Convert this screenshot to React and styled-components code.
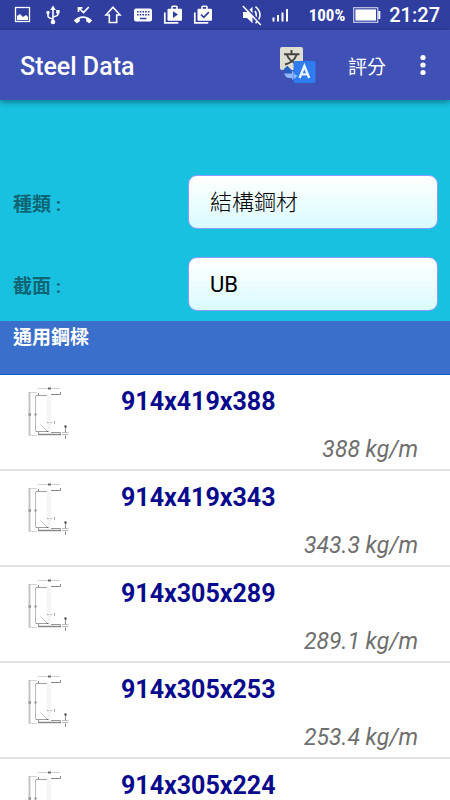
import React from "react";
import styled, { createGlobalStyle } from "styled-components";

const GlobalStyle = createGlobalStyle`
  * { box-sizing: border-box; }
  body {
    margin: 0;
    font-family: Roboto, "Noto Sans CJK TC", sans-serif;
    background: #fff;
  }
`;

const Screen = styled.div`
  display: flex;
  flex-direction: column;
  height: 100vh;
  overflow: hidden;
`;

const StatusBar = styled.div`
  display: flex;
  justify-content: space-between;
  align-items: center;
  flex: none;
  height: 30px;
  padding: 0 10px 0 13px;
  background: #303f9f;
  color: #fff;
`;

const StatusGroup = styled.div`
  display: flex;
  align-items: center;
  gap: ${(p) => p.$gap}px;
`;

const Glyph = styled.svg`
  display: block;
  flex: none;
`;

const BatteryText = styled.span`
  margin-left: 12px;
  font-family: "Roboto Condensed", Roboto, sans-serif;
  font-size: 17px;
  font-weight: 700;
  line-height: 20px;
`;

const Clock = styled.span`
  font-size: 20px;
  font-weight: 500;
  line-height: 24px;
`;

const Toolbar = styled.header`
  display: flex;
  align-items: center;
  flex: none;
  position: relative;
  height: 70px;
  padding: 0 6px 0 20px;
  background: #3f51b5;
  color: #fff;
  box-shadow: 0 2px 6px rgba(0, 0, 0, 0.4);
`;

const Title = styled.h1`
  flex: 1;
  margin: 0;
  padding-top: 4px;
  font-size: 25px;
  font-weight: 500;
  line-height: 32px;
`;

const ToolButton = styled.button`
  display: flex;
  align-items: center;
  justify-content: center;
  width: ${(p) => p.$width}px;
  height: 48px;
  padding: 0;
  border: 0;
  background: none;
  color: inherit;
  font: inherit;
  font-size: 19px;
  cursor: pointer;
`;

const Form = styled.form`
  display: flex;
  flex-direction: column;
  flex: none;
  gap: 28px;
  padding: 75px 12px 10px 13px;
  background: #18c1e0;
`;

const Field = styled.div`
  display: grid;
  grid-template-columns: 175px 1fr;
  align-items: center;
`;

const Label = styled.label`
  padding-top: 6px;
  color: #0e6574;
  font-size: 19px;
  font-weight: 700;
  line-height: 28px;
`;

const Select = styled.select`
  appearance: none;
  width: 100%;
  height: 54px;
  padding: 0 21px;
  border: 1px solid #8f9cff;
  border-radius: 9px;
  background: linear-gradient(#fff, #d9fbff);
  color: #000;
  font-family: inherit;
  font-size: 22px;
  font-weight: ${(p) => p.$weight};
`;

const SectionHeading = styled.h2`
  flex: none;
  height: 54px;
  margin: 0;
  padding: 3px 13px;
  border-bottom: 1px solid #0b5bc7;
  background: #3a6fcb;
  color: #fff;
  font-size: 19px;
  font-weight: 700;
  line-height: 28px;
`;

const List = styled.ul`
  flex: 1;
  min-height: 0;
  margin: 0;
  padding: 0;
  overflow-y: auto;
  scrollbar-width: none;
  list-style: none;
`;

const Row = styled.li`
  display: grid;
  grid-template-columns: 101px 1fr;
  height: 96px;
  padding: 11px 32px 0 20px;
  border-bottom: 2px solid #e4e4e4;
`;

const Details = styled.div`
  display: flex;
  flex-direction: column;
  gap: 16px;
`;

const Name = styled.strong`
  color: #0a0a8c;
  font-size: 25px;
  font-weight: 700;
  line-height: 32px;
`;

const Mass = styled.em`
  color: #6e6e6e;
  font-size: 23px;
  line-height: 32px;
  text-align: right;
`;

const PictureIcon = () => (
  <Glyph width="20" height="20" viewBox="0 0 20 20" fill="none">
    <rect x="2.5" y="2.5" width="14" height="14" stroke="#fff" strokeWidth="1.3" />
    <path d="M4 15v-4l3-2 3 3 3-2 2 2v3z" fill="#fff" />
  </Glyph>
);

const UsbIcon = () => (
  <Glyph width="20" height="20" viewBox="0 0 20 20" fill="none" stroke="#fff" strokeWidth="1.6">
    <path d="M10 4v13M5 8v3q0 2 5 3M15 7v2q0 2-5 3" />
    <path d="M7.2 5L10 .5 12.8 5z" fill="#fff" stroke="none" />
    <circle cx="10" cy="17" r="2.3" fill="#fff" stroke="none" />
    <circle cx="5" cy="7.5" r="1.7" fill="#fff" stroke="none" />
    <path d="M13.2 5h3.4v3.4h-3.4z" fill="#fff" stroke="none" />
  </Glyph>
);

const MissedCallIcon = () => (
  <Glyph width="20" height="20" viewBox="0 0 20 20" fill="none">
    <path d="M5.5 7V2.8h4M5.8 3l4.7 4.5L15.8 2" stroke="#fff" strokeWidth="1.7" />
    <path d="M.8 15.4Q10 7 19.2 15.4l-2.5 2.6q-.5.3-1 0l-2.5-1.8v-2.8q-3.2-1-6.4 0v2.8L4.3 18q-.5.3-1 0z" fill="#fff" />
  </Glyph>
);

const ArrowIcon = () => (
  <Glyph width="20" height="20" viewBox="0 0 20 20" fill="none">
    <path d="M10 2.3L17 10h-3.3v7.5H6.3V10H3z" stroke="#fff" strokeWidth="1.6" />
  </Glyph>
);

const KeyboardIcon = () => (
  <Glyph width="20" height="20" viewBox="0 0 20 20">
    <rect x="1" y="3.5" width="18" height="13" rx="2" fill="#fff" />
    <path d="M4 6.8h12.5M4 9.8h12.5" stroke="#303f9f" strokeWidth="1.6" strokeDasharray="1.6 1.1" />
    <path d="M7 13.5h6.5" stroke="#303f9f" strokeWidth="1.5" />
  </Glyph>
);

const BagIcon = ({ checked }) => (
  <Glyph width="20" height="20" viewBox="0 0 20 20" fill="none">
    <path d="M1.8 7.5v10.3h13.5" stroke="#fff" strokeWidth="1.7" />
    <path d="M9 4V2q0-.8.8-.8h3.4q.8 0 .8.8v2" stroke="#fff" strokeWidth="1.6" />
    <rect x="4.5" y="3.7" width="14.5" height="12" rx="1" fill="#fff" />
    {checked ? (
      <path d="M8 9.7l2.8 2.7 5-5.2" stroke="#303f9f" strokeWidth="1.7" />
    ) : (
      <path d="M10 6.2l5 3.4-5 3.4z" fill="#303f9f" />
    )}
  </Glyph>
);

const MutedIcon = () => (
  <Glyph width="22" height="22" viewBox="0 0 22 22" fill="none">
    <path d="M2 8h4l5.5-5.2v16.4L6 14H2z" fill="#fff" />
    <path d="M14 7q2.5 4 0 8M14.5 2.7q9 7.8 0 16.6" stroke="#fff" strokeWidth="1.6" />
    <path d="M3 1.5l18 19" stroke="#303f9f" strokeWidth="2" />
    <path d="M1.8 2l18 19" stroke="#fff" strokeWidth="1.5" />
  </Glyph>
);

const SignalIcon = () => (
  <Glyph width="18" height="16" viewBox="0 0 18 16">
    <path d="M2.5 14.500v-4M7 14.500V8M11.500 14.500V5.500M16 14.500V2" stroke="#fff" strokeWidth="2" />
  </Glyph>
);

const BatteryIcon = () => (
  <Glyph width="28" height="16" viewBox="0 0 28 16" fill="none">
    <rect x=".7" y=".7" width="24" height="14.6" stroke="#c5cae9" strokeWidth="1.2" />
    <rect x="2.4" y="2.4" width="20.6" height="11.2" fill="#fff" />
    <path d="M25.3 4h2v8h-2z" fill="#fff" />
  </Glyph>
);

const TranslateIcon = () => (
  <Glyph width="36" height="37" viewBox="0 0 36 37" fill="none">
    <rect width="23" height="23" rx="2" fill="#e0ddd1" />
    <path d="M11.5 3v4M4 7.2h15.5M7 8q2 6 11 9.5M16.5 8Q14 15 5 17.5" stroke="#444" strokeWidth="1.9" />
    <path d="M3.5 22.5l3.8-3.8 5 5-3.8 3z" fill="#2262c6" />
    <path d="M4 26.5h8v-3l6 5.5-6 4v-2H9q-3 0-5-4.5z" fill="#8eb8fa" />
    <rect x="13.5" y="14" width="22" height="22" rx="2" fill="#2f7bf0" />
    <path d="M14 26.5l3.5 2.5-3.5 3z" fill="#8eb8fa" />
    <path d="M19.6 31l4.8-12 4.8 12M21 27.4h6.8" stroke="#eef4ff" strokeWidth="2.4" />
  </Glyph>
);

const MoreIcon = () => (
  <Glyph width="6" height="22" viewBox="0 0 6 22" fill="#fff">
    <circle cx="3" cy="3.5" r="2.6" />
    <circle cx="3" cy="11" r="2.6" />
    <circle cx="3" cy="18.5" r="2.6" />
  </Glyph>
);

const BeamDrawing = () => (
  <Glyph width="52" height="56" viewBox="0 0 52 56" fill="none">
    <path d="M18 2.5h22" stroke="#d0d0d0" />
    <path d="M28 2.5h3" stroke="#666" strokeWidth="2" />
    <path d="M17 6.5H8.5M17 49.5H8.5" stroke="#d4d4d4" />
    <path d="M9.500 6v43" stroke="#c4c4c4" strokeWidth="2" />
    <path d="M15.500 10v35" stroke="#b8b8b8" />
    <path d="M15.500 9.500H27M15.500 45.500H27" stroke="#a0a0a0" />
    <path d="M18.500 7v2M31 8.500h9.500V6" stroke="#888" />
    <path d="M28 10v36M30 10v36" stroke="#ebebeb" />
    <path d="M18.500 46v3M31 46.500h9.500V49" stroke="#999" />
    <path d="M18 48.500h23" stroke="#888" strokeWidth="1.5" />
    <path d="M22 40l5.500 5.500" stroke="#bbb" />
    <path d="M26.500 45.500h2" stroke="#666" />
    <path d="M27 36.500h1.500M30.500 36.500h1.500M34.500 35v3" stroke="#aaa" />
    <path d="M42 46.500h6.500M42 48.500h6.500" stroke="#c0c0c0" />
    <path d="M45.500 40v6M45.500 49v4" stroke="#999" />
    <path d="M44.500 40.500h2" stroke="#333" strokeWidth="2" />
    <path d="M8.500 28.500h2.500M14.500 28.500h2" stroke="#888" strokeWidth="2" />
  </Glyph>
);

const beams = [
  { name: "914x419x388", mass: "388" },
  { name: "914x419x343", mass: "343.3" },
  { name: "914x305x289", mass: "289.1" },
  { name: "914x305x253", mass: "253.4" },
  { name: "914x305x224" },
];

export default function App() {
  return (
    <Screen>
      <GlobalStyle />
      <StatusBar>
        <StatusGroup $gap={10}>
          <PictureIcon />
          <UsbIcon />
          <MissedCallIcon />
          <ArrowIcon />
          <KeyboardIcon />
          <BagIcon />
          <BagIcon checked />
        </StatusGroup>
        <StatusGroup $gap={8}>
          <MutedIcon />
          <SignalIcon />
          <BatteryText>100%</BatteryText>
          <BatteryIcon />
          <Clock>21:27</Clock>
        </StatusGroup>
      </StatusBar>
      <Toolbar>
        <Title>Steel Data</Title>
        <ToolButton type="button" $width={68} aria-label="Language">
          <TranslateIcon />
        </ToolButton>
        <ToolButton type="button" $width={70}>評分</ToolButton>
        <ToolButton type="button" $width={42} aria-label="More options">
          <MoreIcon />
        </ToolButton>
      </Toolbar>
      <Form>
        <Field>
          <Label htmlFor="kind">種類 :</Label>
          <Select id="kind" defaultValue="structural" $weight={300}>
            <option value="structural">結構鋼材</option>
          </Select>
        </Field>
        <Field>
          <Label htmlFor="section">截面 :</Label>
          <Select id="section" defaultValue="UB" $weight={400}>
            <option value="UB">UB</option>
          </Select>
        </Field>
      </Form>
      <SectionHeading>通用鋼樑</SectionHeading>
      <List>
        {beams.map((beam) => (
          <Row key={beam.name}>
            <BeamDrawing />
            <Details>
              <Name>{beam.name}</Name>
              {beam.mass && <Mass>{beam.mass} kg/m</Mass>}
            </Details>
          </Row>
        ))}
      </List>
    </Screen>
  );
}
